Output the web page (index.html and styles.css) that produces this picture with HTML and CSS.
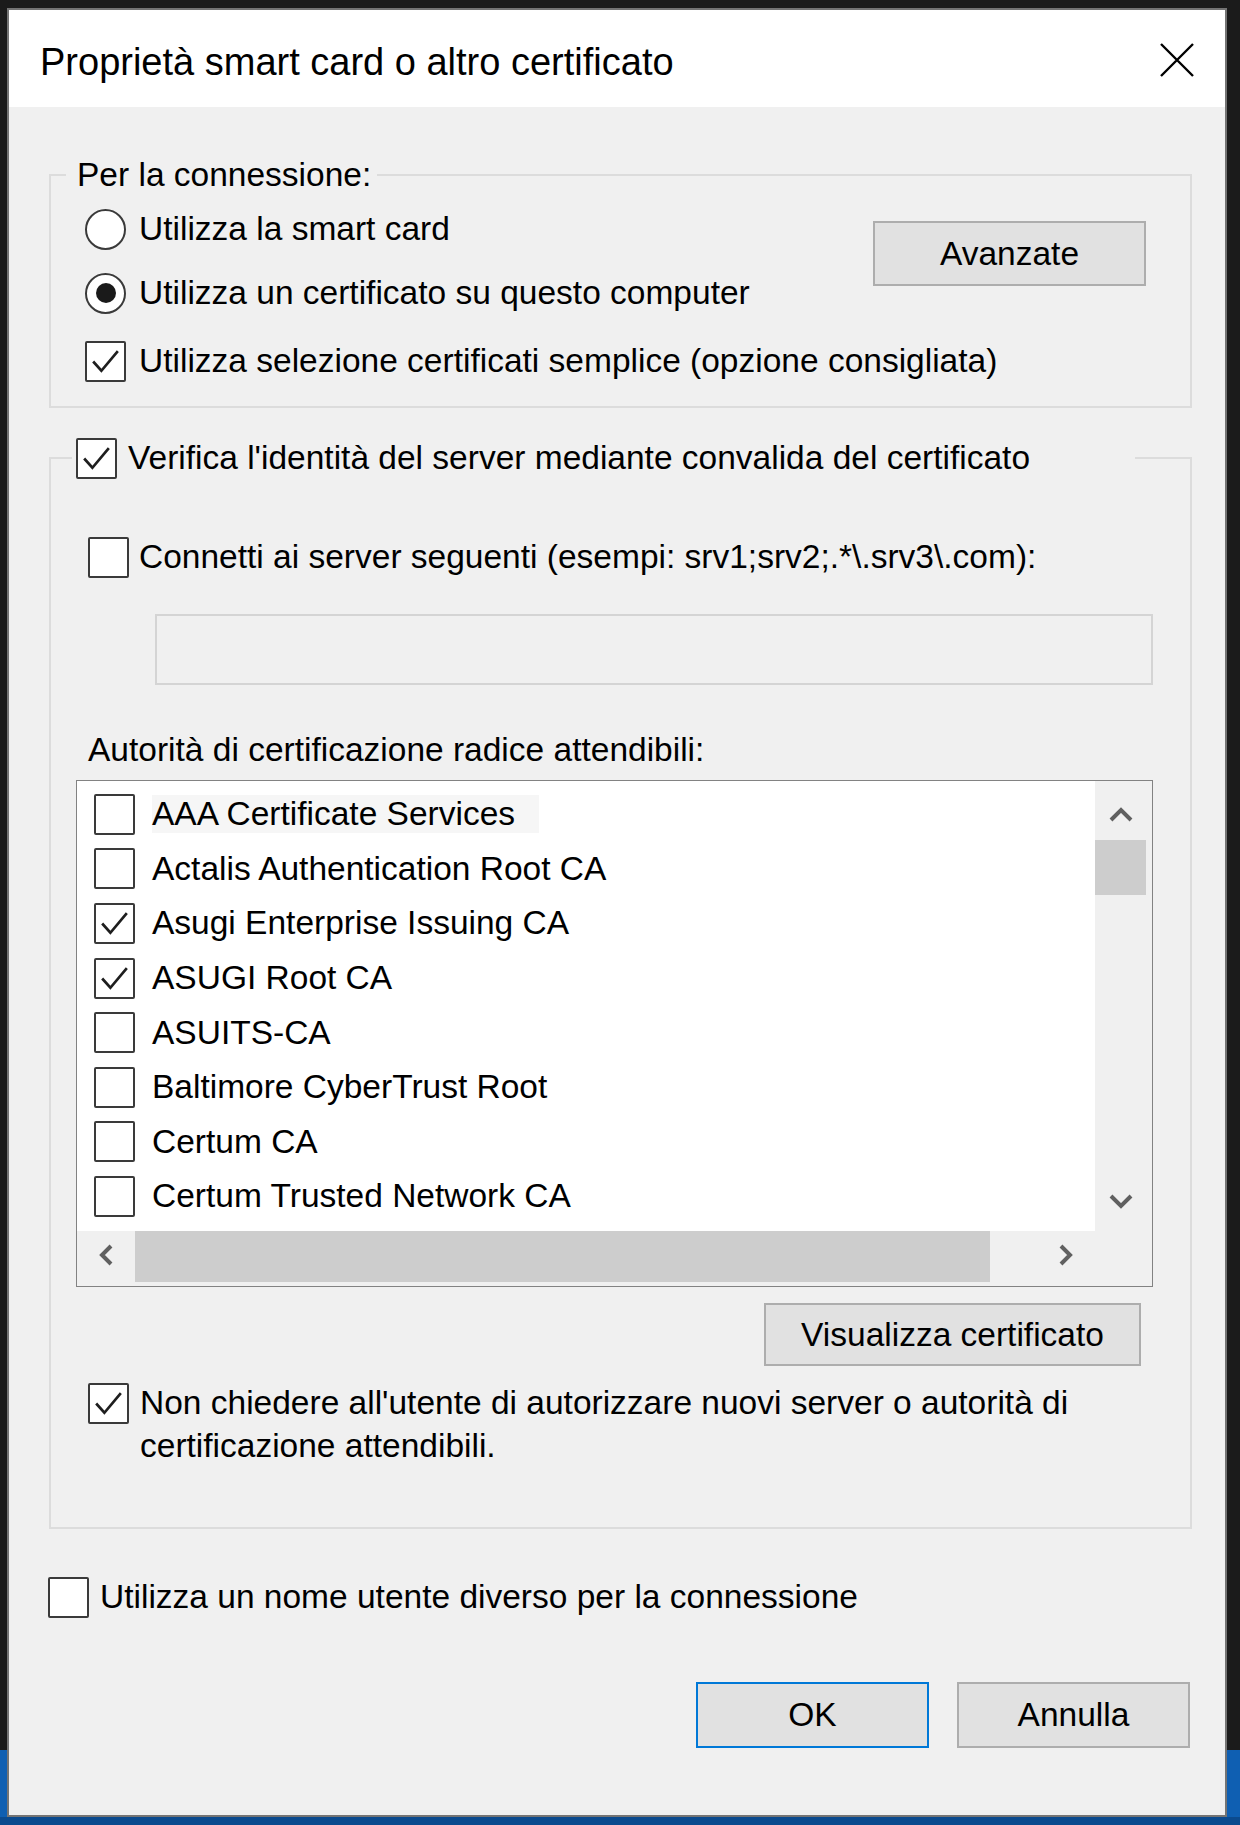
FILE: index.html
```html
<!DOCTYPE html>
<html lang="it">
<head>
<meta charset="utf-8">
<title>Proprietà smart card o altro certificato</title>
<link rel="stylesheet" href="styles.css">
</head>
<body>
<div class="screen">
  <div class="dialog">
    <div class="titlebar">
      <span class="title">Proprietà smart card o altro certificato</span>
      <svg class="close" viewBox="0 0 36 36" width="36" height="36"><path d="M2 2 L34 34 M34 2 L2 34" stroke="#000" stroke-width="2.4" fill="none"/></svg>
    </div>
    <div class="content">
      <div class="group g1">
        <div class="group-title g1-title">Per la connessione:</div>
        <div class="g1-body">
          <div class="row r1"><span class="radio"></span><span class="lbl">Utilizza la smart card</span></div>
          <div class="row r2"><span class="radio checked"><span class="dot"></span></span><span class="lbl">Utilizza un certificato su questo computer</span></div>
          <div class="btn btn-adv">Avanzate</div>
          <div class="row r3"><span class="cb"><svg viewBox="0 0 36 36"><path d="M6 18 L14 27 L30 8" stroke="#1e1e1e" stroke-width="2.6" fill="none"/></svg></span><span class="lbl">Utilizza selezione certificati semplice (opzione consigliata)</span></div>
        </div>
      </div>

      <div class="group g2">
        <div class="group-title g2-title row"><span class="cb"><svg viewBox="0 0 36 36"><path d="M6 18 L14 27 L30 8" stroke="#1e1e1e" stroke-width="2.6" fill="none"/></svg></span><span class="lbl lbl-tight">Verifica l'identità del server mediante convalida del certificato</span></div>
        <div class="row connetti"><span class="cb"></span><span class="lbl">Connetti ai server seguenti (esempi: srv1;srv2;.*\.srv3\.com):</span></div>
        <div class="input-disabled"></div>
        <div class="list-label">Autorità di certificazione radice attendibili:</div>
        <div class="listbox">
          <div class="items">
            <div class="item first"><span class="cb"></span><span class="lbl">AAA Certificate Services</span></div>
            <div class="item"><span class="cb"></span><span class="lbl">Actalis Authentication Root CA</span></div>
            <div class="item"><span class="cb"><svg viewBox="0 0 36 36"><path d="M6 18 L14 27 L30 8" stroke="#1e1e1e" stroke-width="2.6" fill="none"/></svg></span><span class="lbl">Asugi Enterprise Issuing CA</span></div>
            <div class="item"><span class="cb"><svg viewBox="0 0 36 36"><path d="M6 18 L14 27 L30 8" stroke="#1e1e1e" stroke-width="2.6" fill="none"/></svg></span><span class="lbl">ASUGI Root CA</span></div>
            <div class="item"><span class="cb"></span><span class="lbl">ASUITS-CA</span></div>
            <div class="item"><span class="cb"></span><span class="lbl">Baltimore CyberTrust Root</span></div>
            <div class="item"><span class="cb"></span><span class="lbl">Certum CA</span></div>
            <div class="item"><span class="cb"></span><span class="lbl">Certum Trusted Network CA</span></div>
          </div>
          <div class="vscroll">
            <div class="arrow-btn up"><svg viewBox="0 0 26 16" width="26" height="16"><path d="M3 13 L13 3 L23 13" stroke="#606060" stroke-width="4" fill="none"/></svg></div>
            <div class="vthumb"></div>
            <div class="vtrack"></div>
            <div class="arrow-btn down"><svg viewBox="0 0 26 16" width="26" height="16"><path d="M3 3 L13 13 L23 3" stroke="#606060" stroke-width="4" fill="none"/></svg></div>
          </div>
          <div class="hscroll">
            <div class="harrow"><svg viewBox="0 0 16 24" width="16" height="24"><path d="M13 3 L4 12 L13 21" stroke="#606060" stroke-width="4" fill="none"/></svg></div>
            <div class="hthumb"></div>
            <div class="htrack"></div>
            <div class="harrow"><svg viewBox="0 0 16 24" width="16" height="24"><path d="M3 3 L12 12 L3 21" stroke="#606060" stroke-width="4" fill="none"/></svg></div>
          </div>
          <div class="corner"></div>
        </div>
        <div class="btn btn-view">Visualizza certificato</div>
        <div class="row nochiedere"><span class="cb"><svg viewBox="0 0 36 36"><path d="M6 18 L14 27 L30 8" stroke="#1e1e1e" stroke-width="2.6" fill="none"/></svg></span><span class="lbl multi">Non chiedere all'utente di autorizzare nuovi server o autorità di<br>certificazione attendibili.</span></div>
      </div>

      <div class="row nome"><span class="cb"></span><span class="lbl">Utilizza un nome utente diverso per la connessione</span></div>

      <div class="actions">
        <div class="btn btn-ok">OK</div>
        <div class="btn btn-cancel">Annulla</div>
      </div>
    </div>
  </div>
</div>
</body>
</html>
```

FILE: styles.css
```css
* { box-sizing: border-box; }

html, body {
  margin: 0;
  padding: 0;
}

body {
  width: 1240px;
  height: 1825px;
  overflow: hidden;
  background: #1b1b1b;
  font-family: "Liberation Sans", Arial, sans-serif;
  font-size: 33.5px;
  color: #000;
}

.screen {
  width: 1240px;
  height: 1825px;
  padding: 8px 0 0 7px;
  background: linear-gradient(to bottom, #1b1b1b 0, #1b1b1b 1750px, #0f5fb2 1750px, #0f5fb2 1817px, #0b4a8e 1817px);
}

.dialog {
  width: 1220px;
  height: 1809px;
  border: 2px solid #747474;
  background: #f0f0f0;
  display: flex;
  flex-direction: column;
}

/* Title bar */
.titlebar {
  height: 97px;
  flex: none;
  background: #fff;
  display: flex;
  align-items: center;
  justify-content: space-between;
  padding: 0 30px 0 31px;
}

.title {
  font-size: 38px;
  line-height: 38px;
  padding-top: 7px;
  white-space: nowrap;
}

.close {
  display: block;
  margin-top: 3px;
}

/* Content */
.content {
  flex: 1;
  display: flex;
  flex-direction: column;
  padding: 0 33px 0 40px;
}

.group {
  border: 2px solid #dcdcdc;
  display: flex;
  flex-direction: column;
}

.group-title {
  width: fit-content;
  background: #f0f0f0;
  line-height: 38px;
  white-space: nowrap;
}

.g1 {
  margin-top: 67px;
}

.g1-title {
  margin: -20px 0 0 15px;
  padding: 0 6px 0 11px;
}

.g1-body {
  display: grid;
  grid-template-columns: 1fr 273px;
  padding: 0 44px 22px 34px;
}

.row {
  display: flex;
  align-items: center;
  height: 46px;
  white-space: nowrap;
}

.r1 { grid-column: 1; grid-row: 1; margin-top: 12px; }
.r2 { grid-column: 1; grid-row: 2; margin-top: 18px; }
.r3 { grid-column: 1 / 3; grid-row: 3; margin-top: 22px; }

.btn-adv {
  grid-column: 2;
  grid-row: 1 / 3;
  align-self: start;
  width: 273px;
  height: 65px;
  margin-top: 27px;
}

.lbl {
  line-height: 38px;
  margin-left: 13px;
}

.lbl-tight { margin-left: 11px; }

.radio {
  width: 41px;
  height: 41px;
  flex: none;
  border-radius: 50%;
  border: 2.5px solid #3a3a3a;
  background: #fff;
  display: flex;
  align-items: center;
  justify-content: center;
}

.dot {
  width: 20px;
  height: 20px;
  border-radius: 50%;
  background: #1a1a1a;
}

.cb {
  width: 41px;
  height: 41px;
  flex: none;
  border: 2.5px solid #3a3a3a;
  border-radius: 2px;
  background: #fff;
  display: block;
}

.cb svg {
  display: block;
  width: 100%;
  height: 100%;
}

.btn {
  background: #e1e1e1;
  border: 2px solid #adadad;
  display: flex;
  align-items: center;
  justify-content: center;
  white-space: nowrap;
  flex: none;
}

/* Group 2 */
.g2 {
  margin-top: 49px;
  padding-bottom: 60px;
}

.g2-title {
  margin: -24px 0 0 21px;
  padding: 0 105px 0 4px;
  line-height: 46px;
}

.connetti {
  margin: 53px 0 0 37px;
}

.connetti .lbl { margin-left: 10px; }

.input-disabled {
  height: 71px;
  margin: 34px 37px 0 104px;
  border: 2px solid #d4d4d4;
  background: #f0f0f0;
}

.list-label {
  line-height: 38px;
  margin: 46px 0 0 37px;
  white-space: nowrap;
}

.listbox {
  height: 507px;
  margin: 11px 37px 0 25px;
  border: 1.5px solid #828282;
  background: #fff;
  display: grid;
  grid-template-columns: 1fr 57px;
  grid-template-rows: 1fr 55px;
}

.items {
  overflow: hidden;
  padding-top: 6px;
  display: flex;
  flex-direction: column;
}

.item {
  height: 54.6px;
  flex: none;
  display: flex;
  align-items: center;
  padding-left: 17px;
  white-space: nowrap;
}

.item .lbl {
  margin-left: 17px;
}

.item.first .lbl {
  background: #f6f6f6;
  padding-right: 24px;
}

.vscroll {
  background: #f0f0f0;
  display: flex;
  flex-direction: column;
  padding-right: 6px;
}

.arrow-btn {
  height: 59px;
  display: flex;
  justify-content: center;
  align-items: flex-start;
  flex: none;
}

.arrow-btn.up { padding-top: 26px; }
.arrow-btn.down { align-items: center; height: 60px; }

.vthumb {
  height: 55px;
  background: #cdcdcd;
  flex: none;
}

.vtrack { flex: 1; }

.hscroll {
  background: #f0f0f0;
  display: flex;
  align-items: stretch;
}

.harrow {
  width: 58px;
  flex: none;
  display: flex;
  align-items: center;
  justify-content: center;
  padding-bottom: 8px;
}

.hthumb {
  width: 855px;
  flex: none;
  background: #cdcdcd;
  margin-bottom: 4px;
}

.htrack { flex: 1; }

.corner { background: #f0f0f0; }

.btn-view {
  align-self: flex-end;
  width: 377px;
  height: 63px;
  margin: 16px 49px 0 0;
}

.nochiedere {
  margin: 15px 0 0 37px;
  height: auto;
  align-items: flex-start;
}

.nochiedere .cb { margin-top: 2px; }

.lbl.multi {
  line-height: 43px;
  margin-left: 11px;
}

.nome {
  margin: 47px 0 0 -1px;
  height: 42px;
}

.nome .lbl { margin-left: 11px; }

.actions {
  display: flex;
  justify-content: flex-end;
  gap: 28px;
  margin: 64px 2px 0 0;
}

.btn-ok,
.btn-cancel {
  width: 233px;
  height: 66px;
}

.btn-ok {
  border: 2.5px solid #0078d7;
}
```
